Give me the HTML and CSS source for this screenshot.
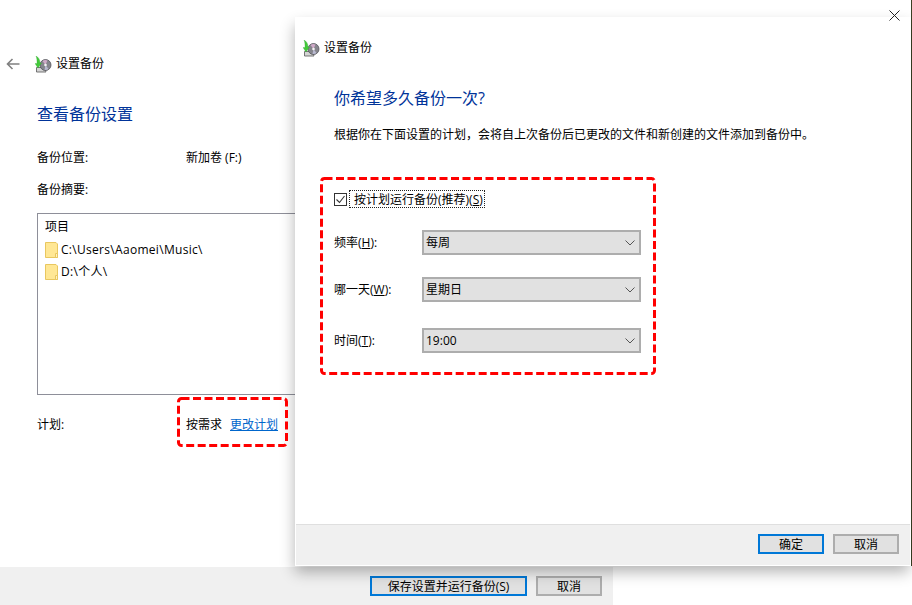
FILE: index.html
```html
<!DOCTYPE html>
<html lang="zh-CN">
<head>
<meta charset="utf-8">
<title>设置备份</title>
<link rel="stylesheet" href="styles.css">
</head>
<body>
<svg class="defs" width="0" height="0" aria-hidden="true">
  <symbol id="backup" viewBox="0 0 17 17">
    <path d="M1.500 11.500h8l1.500 4.500h-9.500z" fill="#d4d4d4" stroke="#666" stroke-width=".9"/>
    <circle cx="10.500" cy="9" r="5.500" fill="#85858c" stroke="#55555c" stroke-width=".8"/>
    <path d="M10.500 9L7.500 5a5 5 0 0 1 5-.5z" fill="#d0a9c8"/>
    <path d="M10.500 9l3 4a5 5 0 0 1-4 1z" fill="#b9b9d0"/>
    <circle cx="10.500" cy="9" r="1.300" fill="#f4f4f4"/>
    <path d="M1 0C3 1 5 3 5 7h1.500L3 12 0 7.500h2C2 5 2 2 1 0z" fill="#43c93a" stroke="#2fa52f" stroke-width=".3"/>
  </symbol>
  <symbol id="folder" viewBox="0 0 13 16">
    <path d="M.5.500h10.500l1.500 1.500v13.500h-12z" fill="#ffe794" stroke="#e9c75f"/>
    <path d="M10.500 15.500v-4h2v4z" fill="#fff2bf" stroke="#e9c75f"/>
  </symbol>
  <symbol id="chev" viewBox="0 0 10 6">
    <path d="M.5.500l4.500 4.500 4.500-4.500" fill="none" stroke="#555" stroke-width="1"/>
  </symbol>
</svg>

<div class="page">
  <main class="back">
    <div class="nav">
      <svg class="arrow" width="14" height="12" viewBox="0 0 14 12"><path d="M6.500 1l-5 5 5 5M1.500 6h12" fill="none" stroke="#808080" stroke-width="1.600"/></svg>
      <svg class="app-icon" width="17" height="17"><use href="#backup"/></svg>
      <span class="nav-title">设置备份</span>
    </div>
    <h1 class="title">查看备份设置</h1>
    <div class="info-row first"><span class="info-label">备份位置:</span><span>新加卷 (F:)</span></div>
    <div class="info-row"><span class="info-label">备份摘要:</span></div>
    <div class="list">
      <div class="list-head">项目</div>
      <div class="list-item"><svg class="folder" width="13" height="16"><use href="#folder"/></svg>C:\Users\Aaomei\Music\</div>
      <div class="list-item"><svg class="folder" width="13" height="16"><use href="#folder"/></svg>D:\个人\</div>
    </div>
    <div class="info-row plan"><span class="info-label">计划:</span><span>按需求</span><a class="link" href="#">更改计划</a></div>
  </main>
  <footer class="back-bar">
    <button class="btn primary wide">保存设置并运行备份(S)</button>
    <button class="btn">取消</button>
  </footer>

  <div class="edge"></div>
  <section class="dialog">
    <div class="dialog-body">
      <div class="dialog-head">
        <svg class="app-icon" width="17" height="17"><use href="#backup"/></svg>
        <span class="nav-title">设置备份</span>
      </div>
      <h2 class="title dialog-title">你希望多久备份一次?</h2>
      <p class="desc">根据你在下面设置的计划，会将自上次备份后已更改的文件和新创建的文件添加到备份中。</p>
      <div class="check-row">
        <span class="check"><svg width="11" height="11" viewBox="0 0 11 11"><path d="M1.500 5.500l3 3 5-6.500" fill="none" stroke="#333" stroke-width="1.100"/></svg></span>
        <span class="check-label">按计划运行备份(推荐)(<u>S</u>)</span>
      </div>
      <div class="field f1"><span class="field-label">频率(<u>H</u>):</span><div class="select">每周<svg class="chevron" width="10" height="6"><use href="#chev"/></svg></div></div>
      <div class="field f2"><span class="field-label">哪一天(<u>W</u>):</span><div class="select">星期日<svg class="chevron" width="10" height="6"><use href="#chev"/></svg></div></div>
      <div class="field f3"><span class="field-label">时间(<u>T</u>):</span><div class="select">19:00<svg class="chevron" width="10" height="6"><use href="#chev"/></svg></div></div>
    </div>
    <div class="dialog-foot">
      <button class="btn primary">确定</button>
      <button class="btn">取消</button>
    </div>
    <button class="close" aria-label="关闭"><svg width="11" height="11" viewBox="0 0 11 11"><path d="M.5.500l10 10M10.500.500l-10 10" stroke="#222" stroke-width="1"/></svg></button>
  </section>

  <svg class="mark mark-form" width="336" height="198"><rect x="1.500" y="1.500" width="333" height="195" rx="3"/></svg>
  <svg class="mark mark-plan" width="111" height="50"><rect x="1.500" y="1.500" width="108" height="47" rx="3"/></svg>
</div>
</body>
</html>
```
FILE: styles.css
```css
* { box-sizing: border-box; }
html, body { margin: 0; height: 100%; background: #fff; overflow: hidden; }
body { font: 12px/16px "Open Sans", "Noto Sans CJK SC", "Liberation Sans", sans-serif; color: #000; }
.defs { position: absolute; }
.page { position: relative; width: 912px; height: 605px; overflow: hidden; }

.back { height: 567px; padding: 55px 0 0 6px; }
.nav { display: flex; align-items: center; height: 18px; }
.arrow { margin-right: 15px; }
.app-icon { flex: none; margin-right: 4px; }
.nav-title { font-size: 12px; }
.title { margin: 0; font-size: 16px; line-height: 22px; font-weight: 400; color: #003399; }
.back .title { margin: 30px 0 0 31px; }
.info-row { display: flex; height: 16px; margin: 16px 0 0 31px; }
.info-row.first { margin-top: 25px; }
.info-label { width: 149px; }
.list { width: 300px; height: 182px; margin: 15px 0 0 31px; padding: 5px 7px; border: 1px solid #8e8f99; }
.list-head { height: 20px; }
.list-item { display: flex; align-items: center; gap: 3px; height: 22px; letter-spacing: .3px; }
.folder { flex: none; }
.info-row.plan { margin-top: 22px; }
.link { margin-left: 8px; color: #0066cc; }

.back-bar { display: flex; justify-content: flex-end; align-items: center; gap: 9px; width: 613px; height: 38px; padding: 0 11px 0 0; background: #f0f0f0; }
.btn { width: 66px; height: 20px; padding: 1px 0 0; font: inherit; line-height: 14px; color: #000; background: #e1e1e1; border: 2px solid #adadad; }
.btn.primary { border-color: #0078d7; }
.btn.wide { width: 157px; }

.edge { position: absolute; right: 0; top: 0; width: 1px; height: 566px; background: #3b4024; }
.dialog { position: absolute; left: 295px; top: 17px; width: 616px; height: 549px; display: flex; flex-direction: column; background: #fff; border: 1px solid #fff; box-shadow: -1px 7px 14px -1px rgba(0, 0, 0, .3); }
.dialog-body { flex: 1; padding: 21px 0 0 7px; }
.dialog-head { display: flex; align-items: center; height: 18px; }
.dialog-title { margin: 30px 0 0 31px; }
.desc { margin: 17px 0 0 31px; line-height: 18px; }
.check-row { display: flex; align-items: center; height: 18px; margin: 46px 0 0 31px; }
.check { display: flex; align-items: center; justify-content: center; width: 13px; height: 13px; margin-right: 2px; border: 1px solid #333; background: #fff; }
.check-label { padding: 0 1px 0 4px; height: 18px; line-height: 17px; border: 1px dotted #222; }
.field { display: flex; align-items: center; margin-left: 31px; }
.f1 { margin-top: 22px; }
.f2 { margin-top: 22px; }
.f3 { margin-top: 26px; }
.field-label { width: 88px; }
.select { display: flex; align-items: center; justify-content: space-between; width: 219px; height: 25px; padding: 1px 4px 0 2px; background: #e1e1e1; border: 2px solid #adadad; }
.dialog-foot { display: flex; justify-content: flex-end; align-items: center; gap: 9px; height: 41px; padding: 0 11px 2px 0; background: #f0f0f0; border-top: 1px solid #dfdfdf; }
.close { position: absolute; right: 10px; top: -8px; width: 11px; height: 11px; padding: 0; border: 0; background: none; line-height: 0; }

.mark { position: absolute; }
.mark rect { fill: none; stroke: #f00; stroke-width: 3; stroke-dasharray: 8 3.500; }
.mark-form { left: 320px; top: 177px; }
.mark-plan { left: 177px; top: 397px; }
```
